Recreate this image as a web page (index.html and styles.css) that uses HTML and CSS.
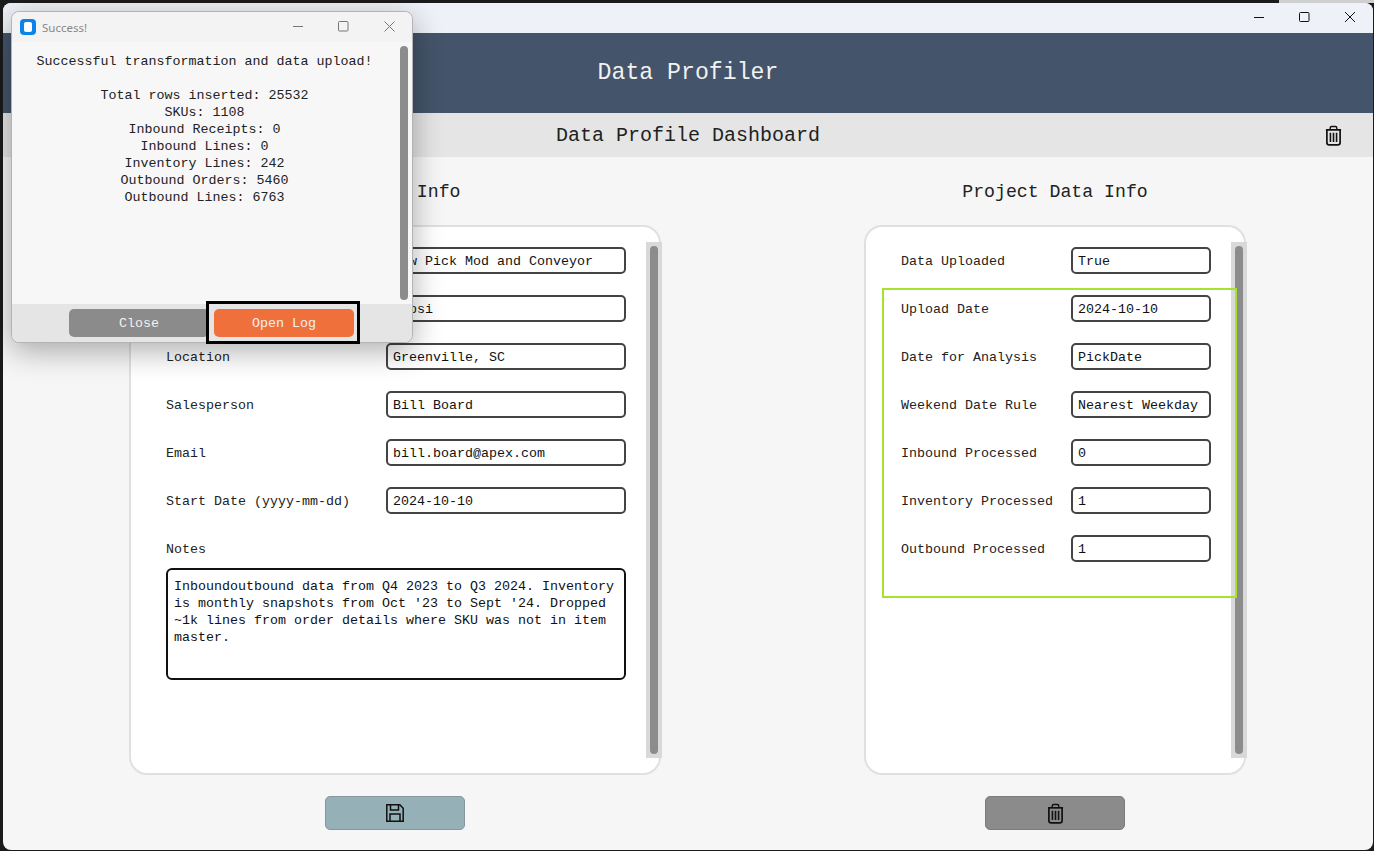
FILE: index.html
```html
<!DOCTYPE html>
<html lang="en">
<head>
  <meta charset="UTF-8">
  <meta name="viewport" content="width=device-width, initial-scale=1.0">
  <title>Data Profiler</title>
  <link rel="stylesheet" href="styles.css">
</head>
<body>
  <div class="app-window">
    <div class="titlebar">
      <svg width="45" height="30" viewBox="0 0 45 30"><path d="M17 14.500h10" stroke="#111" fill="none"/></svg>
      <svg width="45" height="30" viewBox="0 0 45 30"><rect x="17.500" y="9.500" width="9.500" height="9" rx="1" stroke="#111" fill="none"/></svg>
      <svg width="45" height="30" viewBox="0 0 45 30"><path d="M18 9l10 10M28 9l-10 10" stroke="#111" fill="none"/></svg>
    </div>
    <header class="app-header">Data Profiler</header>
    <div class="dash-bar">
      <span></span>
      <h2>Data Profile Dashboard</h2>
      <svg class="dash-trash" width="17" height="21" viewBox="0 0 18 22">
        <use href="#trash"/>
      </svg>
    </div>

    <main class="columns">
      <section class="column">
        <h3>Project Info</h3>
        <div class="card card-wide">
          <div class="form">
            <div class="row"><label>Project Name</label><div class="input">New Pick Mod and Conveyor</div></div>
            <div class="row"><label>Customer</label><div class="input">Pepsi</div></div>
            <div class="row"><label>Location</label><div class="input">Greenville, SC</div></div>
            <div class="row"><label>Salesperson</label><div class="input">Bill Board</div></div>
            <div class="row"><label>Email</label><div class="input">bill.board@apex.com</div></div>
            <div class="row"><label>Start Date (yyyy-mm-dd)</label><div class="input">2024-10-10</div></div>
            <div class="notes-label">Notes</div>
            <div class="notes">Inboundoutbound data from Q4 2023 to Q3 2024. Inventory is monthly snapshots from Oct '23 to Sept '24. Dropped ~1k lines from order details where SKU was not in item master.</div>
          </div>
          <div class="scrollbar"><div class="thumb"></div></div>
        </div>
        <button class="icon-btn btn-save">
          <svg width="18" height="18" viewBox="0 0 18 18" fill="none" stroke="#111" stroke-width="1.500">
            <path d="M.8.8h13l3.400 3.400v13h-16.400z"/>
            <path d="M4.500 1v5h8v-5"/>
            <path d="M4 17v-7h10v7"/>
          </svg>
        </button>
      </section>

      <section class="column">
        <h3>Project Data Info</h3>
        <div class="card card-narrow">
          <div class="form">
            <div class="row"><label>Data Uploaded</label><div class="input">True</div></div>
            <div class="row"><label>Upload Date</label><div class="input">2024-10-10</div></div>
            <div class="row"><label>Date for Analysis</label><div class="input">PickDate</div></div>
            <div class="row"><label>Weekend Date Rule</label><div class="input">Nearest Weekday</div></div>
            <div class="row"><label>Inbound Processed</label><div class="input">0</div></div>
            <div class="row"><label>Inventory Processed</label><div class="input">1</div></div>
            <div class="row"><label>Outbound Processed</label><div class="input">1</div></div>
          </div>
          <div class="scrollbar"><div class="thumb"></div></div>
        </div>
        <button class="icon-btn btn-delete">
          <svg width="17" height="21" viewBox="0 0 18 22"><use href="#trash"/></svg>
        </button>
      </section>
    </main>

    <div class="highlight"></div>
  </div>

  <div class="dialog">
    <div class="dialog-title">
      <span class="app-icon"></span>
      <span class="dialog-name">Success!</span>
      <svg width="45" height="28" viewBox="0 0 45 28"><path d="M16 13.500h10" stroke="#777" fill="none"/></svg>
      <svg width="45" height="28" viewBox="0 0 45 28"><rect x="16.500" y="8.500" width="9.500" height="9.500" rx="1" stroke="#777" fill="none"/></svg>
      <svg width="45" height="28" viewBox="0 0 45 28"><path d="M17.500 8.500l10 10M27.500 8.500l-10 10" stroke="#777" fill="none"/></svg>
    </div>
    <div class="dialog-main">
      <div class="dialog-text">
        <p class="lead">Successful transformation and data upload!</p>
        <p>Total rows inserted: 25532</p>
        <p>SKUs: 1108</p>
        <p>Inbound Receipts: 0</p>
        <p>Inbound Lines: 0</p>
        <p>Inventory Lines: 242</p>
        <p>Outbound Orders: 5460</p>
        <p>Outbound Lines: 6763</p>
      </div>
      <div class="dialog-scroll"></div>
    </div>
    <div class="dialog-footer">
      <button class="dlg-btn dlg-close">Close</button>
      <button class="dlg-btn dlg-open">Open Log</button>
    </div>
    <div class="focus-box"></div>
  </div>

  <svg width="0" height="0" class="defs">
    <symbol id="trash" viewBox="0 0 18 22">
      <path d="M1 5h16" stroke="#111" stroke-width="1.800" fill="none"/>
      <path d="M5.500 4.500v-1.500q0-1.500 1.500-1.500h4q1.500 0 1.500 1.500v1.500" stroke="#111" stroke-width="1.500" fill="none"/>
      <path d="M2 5v13.500q0 2.500 2.500 2.500h9q2.500 0 2.500-2.500v-13.500" stroke="#111" stroke-width="1.800" fill="none"/>
      <path d="M5.750 8v10M9 8v10M12.250 8v10" stroke="#111" stroke-width="1.700" fill="none"/>
    </symbol>
  </svg>
</body>
</html>
```

FILE: styles.css
```css
* {
  box-sizing: border-box;
}
body {
  margin: 0;
  height: 851px;
  overflow: hidden;
  background: #1b1b1d linear-gradient(to right, #1b1b1d 1279px, #cfcfcf 1279px) no-repeat 0 0 / 100% 3px;
  font-family: "Liberation Mono", "Courier New", monospace;
  font-size: 13.33px;
  color: #222;
}
h2, h3, p {
  margin: 0;
  font-weight: normal;
}
.defs {
  display: block;
}

/* Main window */
.app-window {
  position: absolute;
  left: 3px;
  top: 3px;
  width: 1370px;
  height: 847px;
  background: #f6f6f6;
  border-radius: 8px;
  overflow: hidden;
}
.titlebar {
  height: 30px;
  background: #eef2f8;
  display: flex;
  justify-content: flex-end;
  padding-right: 1px;
}
.app-header {
  height: 80px;
  background: #44546a;
  color: #f2f2f2;
  font-size: 23.200px;
  line-height: 80px;
  text-align: center;
}
.dash-bar {
  height: 44px;
  background: #e5e5e5;
  display: grid;
  grid-template-columns: 1fr auto 1fr;
  align-items: center;
  padding: 0 31px;
}
.dash-bar h2 {
  font-size: 20px;
}
.dash-trash {
  justify-self: end;
}

.columns {
  display: flex;
  gap: 203px;
  padding: 25px 124px 0 126px;
}
.column {
  display: flex;
  flex-direction: column;
  align-items: center;
}
.column h3 {
  font-size: 18.200px;
  line-height: 20px;
  margin-bottom: 23px;
}
.card {
  height: 550px;
  background: #fff;
  border: 2px solid #e0e0e0;
  border-radius: 18px;
  display: flex;
}
.card-wide {
  width: 532px;
}
.card-narrow {
  width: 382px;
}
.form {
  flex: 1;
  padding: 20px 0 0 35px;
}
.row {
  height: 27px;
  margin-bottom: 21px;
  display: flex;
  align-items: center;
}
.row label {
  flex: none;
  padding-top: 2px;
}
.card-wide .row label {
  width: 220px;
}
.card-narrow .row label {
  width: 170px;
}
.input {
  height: 27px;
  line-height: 25px;
  padding-left: 5px;
  border: 2px solid #444;
  border-radius: 5px;
  color: #111;
  background: #fff;
}
.card-wide .input {
  width: 240px;
}
.card-narrow .input {
  width: 140px;
}
.notes-label {
  line-height: 17px;
  margin-top: 27px;
}
.notes {
  width: 460px;
  height: 112px;
  margin-top: 10px;
  padding: 8px 6px;
  border: 2px solid #111;
  border-radius: 6px;
  line-height: 17px;
  color: #111;
}
.scrollbar {
  flex: none;
  width: 16px;
  margin: 15px -3px 15px 0;
  padding: 4px;
  background: #d9d9d9;
}
.thumb {
  height: 100%;
  background: #8c8c8c;
  border-radius: 4px;
}
.icon-btn {
  width: 140px;
  height: 34px;
  margin-top: 21px;
  border: 1px solid #85979d;
  border-radius: 5px;
  display: flex;
  align-items: center;
  justify-content: center;
  padding: 0;
}
.btn-save {
  background: #95b0b7;
}
.btn-delete {
  background: #8b8b8b;
  border-color: #7c7c7c;
}

/* annotation drawn over the screenshot */
.highlight {
  position: absolute;
  left: 879px;
  top: 285px;
  width: 355px;
  height: 310px;
  border: 2px solid #a6e22e;
}

/* Popup */
.dialog {
  position: absolute;
  left: 11px;
  top: 11px;
  width: 402px;
  height: 332px;
  background: #f7f7f7;
  border: 1px solid #b4b4b4;
  border-radius: 8px;
  box-shadow: 0 8px 30px rgba(0, 0, 0, 0.32);
  display: flex;
  flex-direction: column;
}
.dialog-title {
  height: 30px;
  flex: none;
  background: #f3f3f3;
  border-radius: 8px 8px 0 0;
  display: flex;
  align-items: center;
  padding-left: 8px;
}
.app-icon {
  width: 16px;
  height: 16px;
  border-radius: 4px;
  background: #0a84e8;
  position: relative;
}
.app-icon::after {
  content: "";
  position: absolute;
  left: 4px;
  top: 3px;
  width: 8px;
  height: 10px;
  border-radius: 2px;
  background: #fff;
}
.dialog-name {
  flex: 1;
  margin-left: 6px;
  font-family: "Noto Sans", sans-serif;
  font-size: 11.500px;
  color: #888;
}
.dialog-main {
  flex: 1;
  display: flex;
  min-height: 0;
}
.dialog-text {
  flex: 1;
  padding: 11px 3px 0 0;
  text-align: center;
  line-height: 17px;
}
.lead {
  margin-bottom: 17px;
}
.dialog-scroll {
  width: 8px;
  flex: none;
  margin: 4px 4px 4px 0;
  background: #8c8c8c;
  border-radius: 4px;
}
.dialog-footer {
  height: 38px;
  flex: none;
  background: #e5e5e5;
  border-radius: 0 0 8px 8px;
  display: flex;
  gap: 5px;
  padding: 5px 0 0 57px;
}
.dlg-btn {
  width: 140px;
  height: 28px;
  border: none;
  border-radius: 5px;
  font-family: inherit;
  font-size: 13.33px;
  color: #f2f2f2;
  padding: 0;
}
.dlg-close {
  background: #8b8b8b;
}
.dlg-open {
  background: #f0703c;
}
.focus-box {
  position: absolute;
  left: 194px;
  top: 289px;
  width: 154px;
  height: 43px;
  border: 3px solid #000;
}
```
